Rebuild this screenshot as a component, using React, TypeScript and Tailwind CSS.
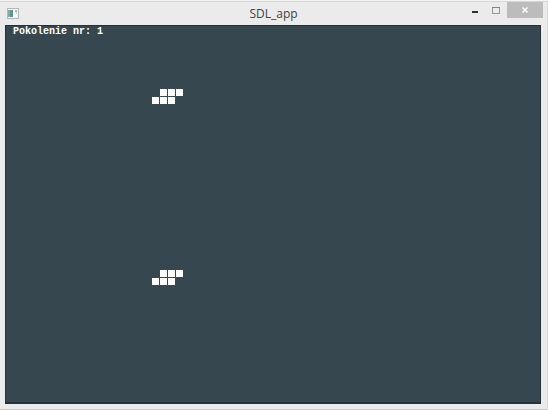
type Cell = { column: number; row: number };

const CELL_SIZE = 7;
const CELL_PITCH = 8;

const toad: Cell[] = [
  { column: 1, row: 0 },
  { column: 2, row: 0 },
  { column: 3, row: 0 },
  { column: 0, row: 1 },
  { column: 1, row: 1 },
  { column: 2, row: 1 },
];

const colonies = [
  { x: 146, y: 63 },
  { x: 146, y: 244 },
];

function AppIcon() {
  return (
    <svg className="h-3 w-3 shrink-0" viewBox="0 0 12 12" aria-hidden="true">
      <rect x="0.5" y="0.5" width="11" height="10" fill="#f5f6f6" stroke="#b3b7b8" />
      <rect x="1" y="2" width="5" height="7" fill="#5f9690" />
      <rect x="1" y="2" width="2" height="7" fill="#87aaa9" />
      <rect x="8" y="2" width="2" height="2" fill="#a9b8bd" />
      <rect x="9" y="4" width="1" height="2" fill="#d0d6d8" />
    </svg>
  );
}

function TitleBar() {
  return (
    <header className="relative flex h-[23px] items-start justify-between pl-[7px] pr-1">
      <div className="pt-1.5">
        <AppIcon />
      </div>
      <h1 className="absolute inset-x-0 top-0 text-center font-['Open_Sans',sans-serif] text-[12px] leading-6 text-[#414141]">
        SDL_app
      </h1>
      <div className="relative flex">
        <button type="button" aria-label="Minimize" className="flex h-4 w-5 items-start justify-center pt-[9px]">
          <svg className="h-0.5 w-1.5" viewBox="0 0 6 2" aria-hidden="true">
            <rect width="6" height="2" fill="#303030" />
          </svg>
        </button>
        <button type="button" aria-label="Maximize" className="flex h-4 w-[22px] items-start justify-center pt-[5px]">
          <svg className="h-[7px] w-2" viewBox="0 0 8 7" aria-hidden="true">
            <rect x="0.5" y="0.5" width="7" height="6" fill="none" stroke="#989898" />
            <rect width="8" height="1" fill="#858585" />
          </svg>
        </button>
        <button type="button" aria-label="Close" className="flex h-4 w-9 items-center justify-center bg-[#bcbcbc]">
          <svg className="h-1.5 w-1.5" viewBox="0 0 6 6" aria-hidden="true">
            <path d="M0.5 0.5 5.5 5.5M5.5 0.5 0.5 5.5" stroke="#ffffff" strokeWidth="1.5" />
          </svg>
        </button>
      </div>
    </header>
  );
}

function Board() {
  return (
    <svg className="absolute inset-0 h-full w-full" shapeRendering="crispEdges" role="img" aria-label="Game of Life">
      {colonies.map((colony) =>
        toad.map((cell) => (
          <rect
            key={`${colony.y}-${cell.column}-${cell.row}`}
            x={colony.x + cell.column * CELL_PITCH}
            y={colony.y + cell.row * CELL_PITCH}
            width={CELL_SIZE}
            height={CELL_SIZE}
            fill="#ffffff"
          />
        )),
      )}
    </svg>
  );
}

export default function App() {
  return (
    <div className="h-screen bg-[#f4f4f4] pt-px">
      <div className="flex h-full flex-col border-y border-r border-b-[#c9c9c9] border-r-[#d8d8d8] border-t-[#d6d6d6] bg-[#ebebeb] pb-[5px]">
        <TitleBar />
        <main className="relative ml-[5px] mr-1.5 flex-1 border border-b-2 border-[#26323b] bg-[#37474f]">
          <Board />
          <p className="relative pl-[7px] font-['Liberation_Mono',monospace] text-[10px] font-bold leading-3 text-white">
            Pokolenie nr: 1
          </p>
        </main>
      </div>
    </div>
  );
}
